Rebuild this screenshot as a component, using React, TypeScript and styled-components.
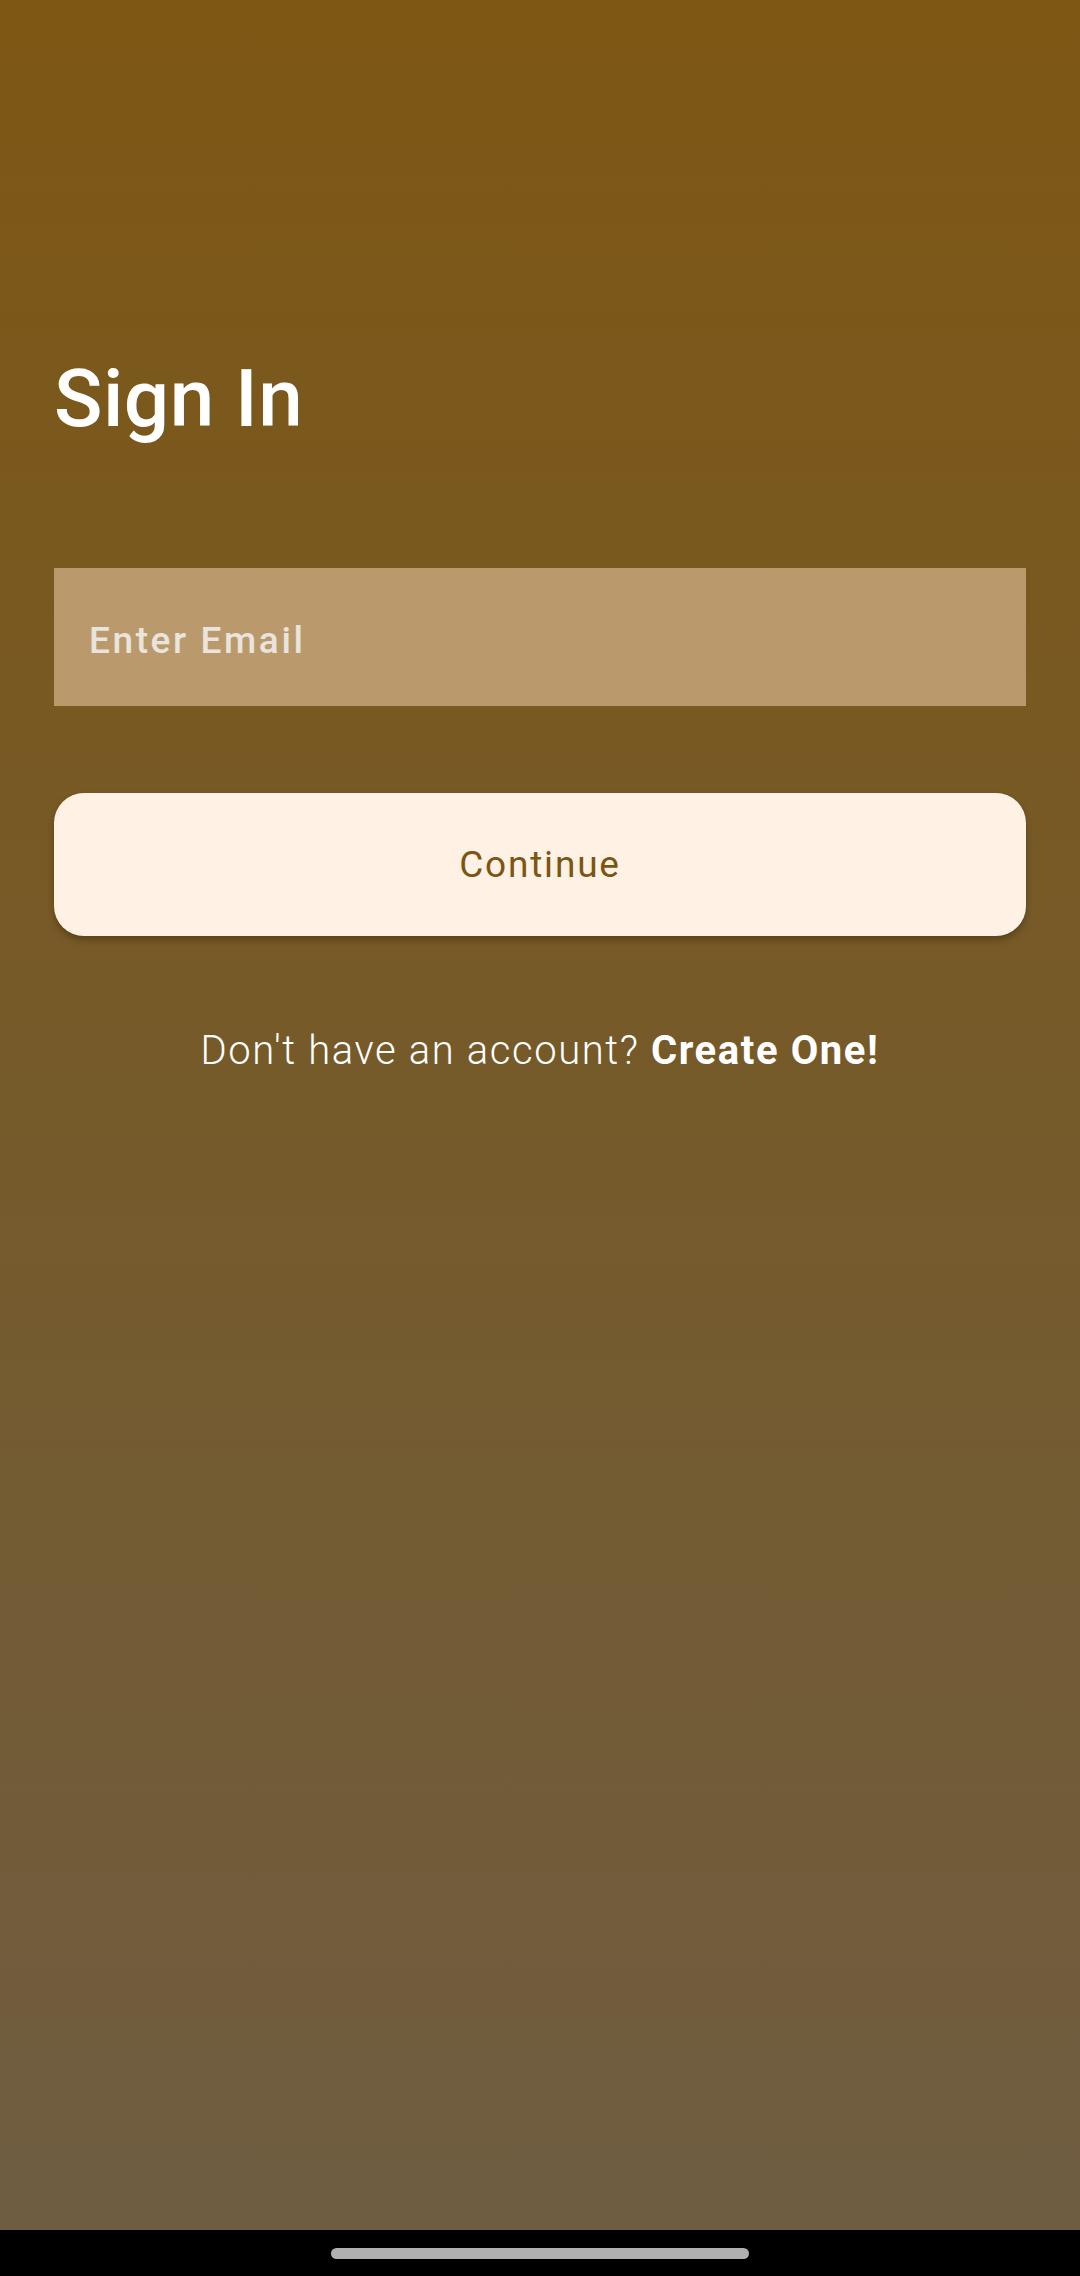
import React from "react";
import styled, { createGlobalStyle } from "styled-components";

const Global = createGlobalStyle`
  html, body { margin: 0; padding: 0; }
  body { font-family: Roboto, "Noto Sans", sans-serif; }
  * { box-sizing: border-box; }
`;

const Screen = styled.div`
  width: 1080px;
  height: 2276px;
  display: flex;
  flex-direction: column;
`;

const Content = styled.main`
  flex: 1;
  background: linear-gradient(180deg, #7e5714 0%, #765a28 45%, #6f5d42 100%);
  padding: 344px 54px 0;
  display: flex;
  flex-direction: column;
`;

const Title = styled.h1`
  margin: 0;
  color: #ffffff;
  font-family: Roboto, "Noto Sans", sans-serif;
  font-weight: 500;
  font-size: 80px;
  line-height: 110px;
  letter-spacing: 0.5px;
`;

const EmailInput = styled.input`
  margin-top: 114px;
  height: 138px;
  width: 100%;
  border: none;
  outline: none;
  background: #ba9a6c;
  padding: 6px 35px 0;
  font-family: Roboto, "Noto Sans", sans-serif;
  font-size: 37px;
  font-weight: 500;
  letter-spacing: 2.6px;
  color: #ffffff;
  &::placeholder { color: #e9e4dc; }
`;

const PrimaryButton = styled.button`
  margin-top: 87px;
  height: 143px;
  width: 100%;
  border: none;
  border-radius: 30px;
  background: #fff2e5;
  color: #7b5514;
  font-family: Roboto, "Noto Sans", sans-serif;
  font-size: 37px;
  font-weight: 400;
  letter-spacing: 1.8px;
  box-shadow: 0 4px 6px rgba(40, 25, 0, 0.35);
`;

const Footer = styled.p`
  margin: 85px 0 0;
  text-align: center;
  color: #ffffff;
  font-family: Roboto, "Noto Sans", sans-serif;
  font-size: 40px;
  font-weight: 300;
  line-height: 60px;
  letter-spacing: 1.6px;
`;

const Strong = styled.span`
  font-weight: 700;
`;

const NavBar = styled.div`
  height: 46px;
  background: #000;
  display: flex;
  justify-content: center;
  padding-top: 18px;
`;

const HomeIndicator = styled.div`
  width: 418px;
  height: 11px;
  border-radius: 6px;
  background: #b0b0b0;
`;

export default function App() {
  return (
    <>
      <Global />
      <Screen>
        <Content>
          <Title>Sign In</Title>
          <EmailInput placeholder="Enter Email" />
          <PrimaryButton>Continue</PrimaryButton>
          <Footer>
            Don't have an account? <Strong>Create One!</Strong>
          </Footer>
        </Content>
        <NavBar>
          <HomeIndicator />
        </NavBar>
      </Screen>
    </>
  );
}
